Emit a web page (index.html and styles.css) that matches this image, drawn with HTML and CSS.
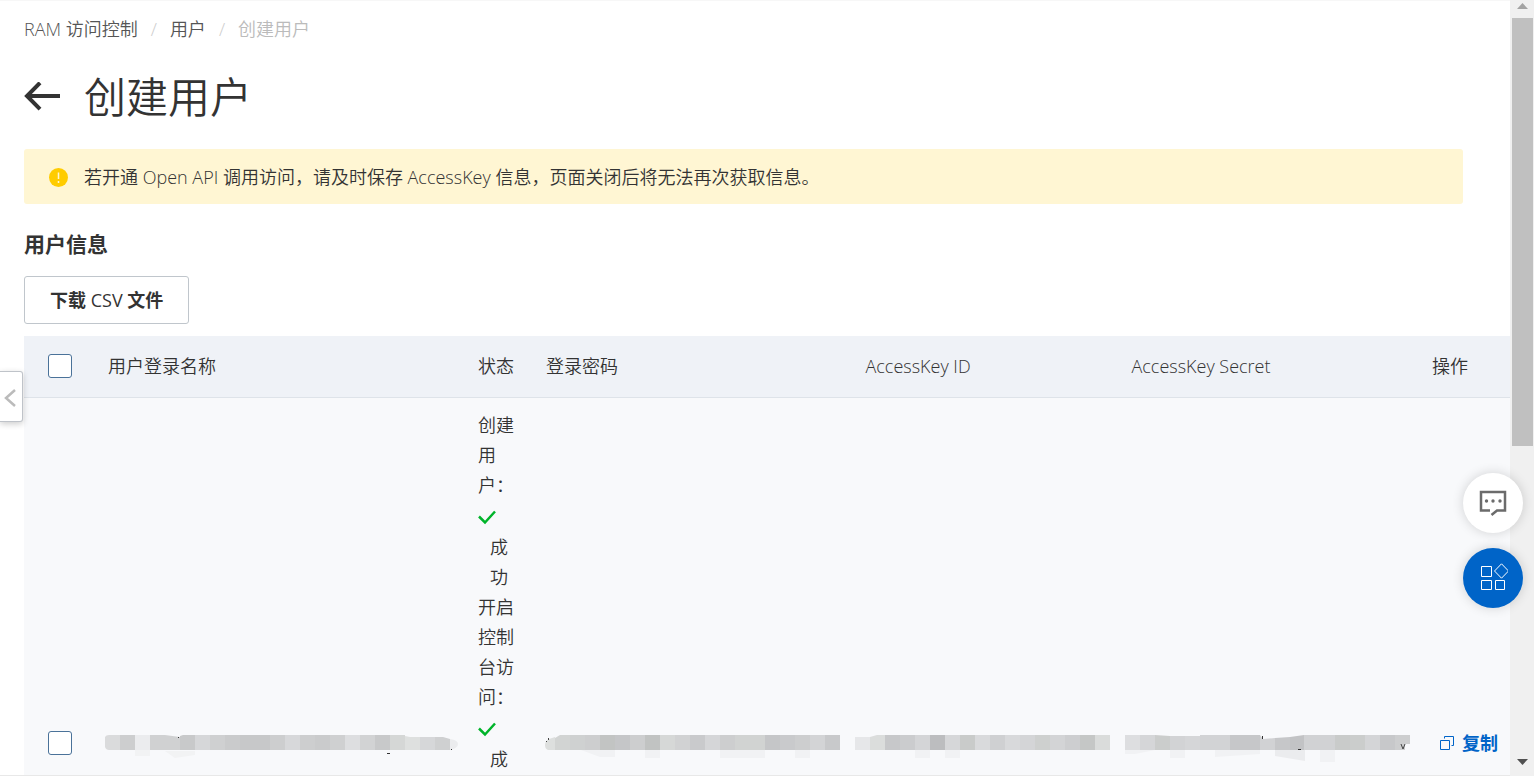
FILE: index.html
```html
<!DOCTYPE html>
<html lang="zh-CN">
<head>
    <meta charset="UTF-8">
    <meta name="viewport" content="width=device-width, initial-scale=1.0">
    <title>创建用户</title>
    <link rel="stylesheet" href="styles.css">
</head>
<body>
    <main class="page">
        <nav class="breadcrumb">
            <a href="#">RAM 访问控制</a>
            <span class="separator">/</span>
            <a href="#">用户</a>
            <span class="separator">/</span>
            <span class="current">创建用户</span>
        </nav>

        <header class="title-bar">
            <a href="#" class="back" aria-label="返回">
                <svg width="36" height="30" viewBox="0 0 36 30" fill="none" stroke="#333" stroke-width="4">
                    <path d="M36 14H3M16 .8L3 14L16 27.200"/>
                </svg>
            </a>
            <h1>创建用户</h1>
        </header>

        <div class="notice">
            <svg width="19" height="19" viewBox="0 0 19 19">
                <circle cx="9.500" cy="9.500" r="9.500" fill="#fc0"/>
                <path d="M9.500 4.500V11M9.500 13V15" stroke="#fff6d3" stroke-width="1.500"/>
            </svg>
            <p>若开通 Open API 调用访问，请及时保存 AccessKey 信息，页面关闭后将无法再次获取信息。</p>
        </div>

        <h2>用户信息</h2>
        <button type="button" class="download"><b>下载</b> CSV <b>文件</b></button>

        <table class="users">
            <colgroup>
                <col class="col-check">
                <col class="col-name">
                <col class="col-status">
                <col class="col-password">
                <col class="col-key">
                <col>
                <col class="col-action">
            </colgroup>
            <thead>
                <tr>
                    <th class="check"><input type="checkbox" aria-label="全选"></th>
                    <th>用户登录名称</th>
                    <th>状态</th>
                    <th>登录密码</th>
                    <th>AccessKey ID</th>
                    <th>AccessKey Secret</th>
                    <th>操作</th>
                </tr>
            </thead>
            <tbody>
                <tr>
                    <td class="check"><input type="checkbox" aria-label="选择用户"></td>
                    <td>
                        <svg class="mask" width="330" height="24" viewBox="0 0 330 24">
                            <path d="M27 19h15v6H27zM57 20h30v4l-20 3z" fill="#f2f3f4"/>
                            <path d="M-3 6q1-2 4-2h11v15H1q-3 0-4-3z" fill="#dadbdc"/>
                            <path d="M12 4h15v15H12z" fill="#cdcecf"/>
                            <path d="M27 4h15v15H27z" fill="#ebecee"/>
                            <path d="M42 4h15l15 2v13H42z" fill="#d0d1d2"/>
                            <path d="M72 5l3-1h12v15H72z" fill="#c8c9ca"/>
                            <path d="M87 4h15v15H87z" fill="#d6d7d9"/>
                            <path d="M102 4h15v15h-15z" fill="#cfd0d1"/>
                            <path d="M117 4h15v15h-15z" fill="#cacbcc"/>
                            <path d="M132 4h30v15h-30z" fill="#c7c8c9"/>
                            <path d="M162 4h15v15h-15z" fill="#cdcecf"/>
                            <path d="M177 4h15v15h-15z" fill="#d7d8da"/>
                            <path d="M192 4h15v15h-15z" fill="#cdcecf"/>
                            <path d="M207 4h15v15h-15z" fill="#cacbcc"/>
                            <path d="M222 4h15v15h-15z" fill="#cfd0d1"/>
                            <path d="M237 4h15v15h-15z" fill="#dddee0"/>
                            <path d="M252 4h15v15h-15z" fill="#d2d3d4"/>
                            <path d="M267 4h15v15h-15z" fill="#c8c9ca"/>
                            <path d="M282 4h15v15h-15z" fill="#d5d7d6"/>
                            <path d="M297 5l5 1h10v13h-15z" fill="#dee0df"/>
                            <path d="M312 6h15v13h-15z" fill="#d6d7d9"/>
                            <path d="M327 6h8l7 2v11h-15z" fill="#cfd0d1"/>
                            <path d="M342 8q8 1 8 5t-8 6z" fill="#ebecee"/>
                            <path d="M70 6h1v1h-1zM279 22h3v1h-3zM343 18h1v1h-1z" fill="#333"/>
                        </svg>
                    </td>
                    <td class="status">
                        <div>创建用户：</div>
                        <svg width="18" height="32" viewBox="0 0 18 32" fill="none" stroke="#00b42a" stroke-width="2.500">
                            <path d="M1 16.500L7 22.500L17 11.500"/>
                        </svg>
                        <div class="result">成功</div>
                        <div>开启控制台访问：</div>
                        <svg width="18" height="32" viewBox="0 0 18 32" fill="none" stroke="#00b42a" stroke-width="2.500">
                            <path d="M1 16.500L7 22.500L17 11.500"/>
                        </svg>
                        <div class="result">成功</div>
                    </td>
                    <td>
                        <svg class="mask" width="280" height="24" viewBox="0 0 280 24">
                            <path d="M35 19h34v7H54zM99 19h15v8H99zM174 19h45v8h-45zM249 19h15v8h-15z" fill="#f1f2f4"/>
                            <path d="M9 6v13H2q-3-1-3-5t4-6z" fill="#dddfde"/>
                            <path d="M9 7l5-3h10v15H9z" fill="#d2d4d3"/>
                            <path d="M24 4h15v15H24z" fill="#cfd1d1"/>
                            <path d="M39 4h15v15H39z" fill="#cdcecf"/>
                            <path d="M54 4h15v15H54z" fill="#c2c4c3"/>
                            <path d="M69 4h15v15H69z" fill="#c5c6c8"/>
                            <path d="M84 4h15v15H84z" fill="#cdcecf"/>
                            <path d="M99 4h15v15H99z" fill="#c1c3c2"/>
                            <path d="M114 4h15v15h-15z" fill="#d6d8d7"/>
                            <path d="M129 4h15v15h-15z" fill="#d1d2d3"/>
                            <path d="M144 4h15v15h-15z" fill="#c9cacc"/>
                            <path d="M159 4h15v15h-15z" fill="#d5d6d8"/>
                            <path d="M174 4h15v15h-15z" fill="#cdcecf"/>
                            <path d="M189 4h30v15h-30z" fill="#d1d3d2"/>
                            <path d="M219 4h15v15h-15z" fill="#c5c6c8"/>
                            <path d="M234 4h15v15h-15z" fill="#c9cacc"/>
                            <path d="M249 4h15v15h-15z" fill="#cdcecf"/>
                            <path d="M264 4h15v15h-15z" fill="#d3d4d6"/>
                            <path d="M279 4h15v15h-15z" fill="#c8c9cb"/>
                            <path d="M2 7h1v2H2zM0 10h1v1H0z" fill="#444"/>
                        </svg>
                    </td>
                    <td>
                        <svg class="mask" width="230" height="24" viewBox="0 0 230 24">
                            <path d="M50 19h15v8H50zM80 19h15v8H80z" fill="#f1f2f4"/>
                            <path d="M-10 6H5v13h-15z" fill="#e6e7e9"/>
                            <path d="M5 6l7-2h8v15H5z" fill="#dbdddc"/>
                            <path d="M20 4h15v15H20z" fill="#c7c8ca"/>
                            <path d="M35 4h15v15H35z" fill="#cbccce"/>
                            <path d="M50 4h15v15H50z" fill="#d4d5d7"/>
                            <path d="M65 4h15v15H65z" fill="#bcbdbf"/>
                            <path d="M80 4h15v15H80z" fill="#d6d7d9"/>
                            <path d="M95 4h15v15H95z" fill="#c9cbca"/>
                            <path d="M110 4h15v15h-15z" fill="#d9dadc"/>
                            <path d="M125 4h15v15h-15z" fill="#cfd0d2"/>
                            <path d="M140 4h15v15h-15z" fill="#d8d9db"/>
                            <path d="M155 4h15v15h-15z" fill="#d4d5d7"/>
                            <path d="M170 4h15v15h-15z" fill="#ced0cf"/>
                            <path d="M185 4h15v15h-15z" fill="#d3d4d6"/>
                            <path d="M200 4h15v15h-15z" fill="#cdced0"/>
                            <path d="M215 4h15v15h-15z" fill="#c5c7c6"/>
                            <path d="M230 4h15v15h-15z" fill="#dadcdb"/>
                        </svg>
                    </td>
                    <td>
                        <svg class="mask" width="260" height="24" viewBox="0 0 260 24">
                            <path d="M-6 19h30l-20 4h-10zM39 19h15v8H39zM84 19h45v4l-45 3zM189 19h15v12h-15z" fill="#f1f2f4"/>
                            <path d="M144 19h30v11l-30-5z" fill="#ebecee"/>
                            <path d="M-6 4H9v15H-6z" fill="#dddee0"/>
                            <path d="M9 4h15v15H9z" fill="#d5d6d8"/>
                            <path d="M24 4l15 1v14H24z" fill="#cbcdcc"/>
                            <path d="M39 5h15v14H39z" fill="#d2d3d5"/>
                            <path d="M54 5h15v14H54z" fill="#d5d6d8"/>
                            <path d="M69 4h30v15H69z" fill="#d2d3d5"/>
                            <path d="M99 4h30v15H99z" fill="#c6c7c9"/>
                            <path d="M129 4l3 4 12-1v12h-15z" fill="#d1d2d4"/>
                            <path d="M144 7l15-1v13h-15z" fill="#c6c7c9"/>
                            <path d="M159 6l14-2v15h-14z" fill="#c2c3c5"/>
                            <path d="M173 4h31v15h-31z" fill="#d1d2d4"/>
                            <path d="M204 4h15v15h-15z" fill="#c9cbca"/>
                            <path d="M219 4h15v15h-15z" fill="#cbcdcc"/>
                            <path d="M234 4h15v15h-15z" fill="#d4d5d7"/>
                            <path d="M249 4h15v15h-15z" fill="#c7c8ca"/>
                            <path d="M264 4h15v9h-5v6h-10z" fill="#cdcecf"/>
                            <path d="M131 5h1v3h-1zM167 18h3v1h-3z" fill="#333"/>
                            <path d="M270 13l2 5 2-5" fill="none" stroke="#444"/>
                        </svg>
                    </td>
                    <td class="action">
                        <a href="#">
                            <svg width="14" height="14" viewBox="0 0 14 14" fill="none" stroke="#0064c8">
                                <path d="M.5 4.500h9v9h-9zM4.500 2.500V.5h9v9h-2"/>
                            </svg>
                            复制
                        </a>
                    </td>
                </tr>
            </tbody>
        </table>
    </main>

    <div class="scrollbar" aria-hidden="true">
        <svg width="11" height="6" viewBox="0 0 11 6"><path d="M0 6L5.500 0L11 6z" fill="#a3a3a3"/></svg>
        <div class="thumb"></div>
        <svg width="11" height="6" viewBox="0 0 11 6"><path d="M0 0L5.500 6L11 0z" fill="#505050"/></svg>
    </div>

    <button type="button" class="collapse" aria-label="展开菜单">
        <svg width="12" height="18" viewBox="0 0 12 18" fill="none" stroke="#bbb" stroke-width="2.500">
            <path d="M11 1L2 9L11 17"/>
        </svg>
    </button>

    <div class="float-buttons">
        <button type="button" class="feedback" aria-label="反馈">
            <svg width="28" height="26" viewBox="0 0 28 26">
                <path d="M11 20.500H2V2H26V20.500H18L12.500 25" fill="none" stroke="#6b6b6b" stroke-width="2.500"/>
                <circle cx="7.500" cy="11" r="1.700" fill="#6b6b6b"/>
                <circle cx="14" cy="11" r="1.700" fill="#6b6b6b"/>
                <circle cx="21" cy="11" r="1.700" fill="#6b6b6b"/>
            </svg>
        </button>
        <button type="button" class="apps" aria-label="应用">
            <svg width="30" height="30" viewBox="0 0 30 30" fill="none" stroke="#fff">
                <path d="M3.500 3.500h10v10h-10zM3.500 17.500h10v9h-10zM17.500 17.500h9v9h-9zM23.500 .8L30.500 8L23.500 15.200L16.500 8z"/>
            </svg>
        </button>
    </div>
</body>
</html>
```
FILE: styles.css
```css
* {
    box-sizing: border-box;
}
body {
    margin: 0;
    display: flex;
    height: 100vh;
    overflow: hidden;
    font-family: "Open Sans", "Noto Sans CJK SC", sans-serif;
    font-size: 18px;
    font-weight: 350;
    line-height: 30px;
    color: #333;
    background-color: #fff;
}
a {
    color: inherit;
    text-decoration: none;
}
button {
    font: inherit;
    color: inherit;
    cursor: pointer;
}
svg {
    display: block;
    flex: none;
}
.page {
    flex: 1;
    min-width: 0;
    padding: 13px 0 0 24px;
    overflow: hidden;
    border-top: 1px solid #f7f7f7;
    border-bottom: 1px solid #e8e8e8;
}
.breadcrumb {
    display: flex;
    gap: 13px;
    color: #555;
}
.breadcrumb .separator {
    color: #ccc;
}
.breadcrumb .current {
    color: #bbb;
}
.title-bar {
    display: flex;
    align-items: center;
    gap: 24px;
    margin-top: 23px;
}
h1 {
    margin: 0;
    font-size: 42px;
    font-weight: 350;
    line-height: 60px;
}
.notice {
    display: flex;
    align-items: center;
    gap: 16px;
    margin: 22px 47px 0 0;
    padding: 13px 24px 12px 25px;
    border-radius: 3px;
    background-color: #fff6d3;
}
.notice p {
    margin: 0;
}
h2 {
    margin: 24px 0 16px;
    font-size: 21px;
    font-weight: 700;
    line-height: 32px;
}
.download {
    height: 48px;
    padding: 0 25px;
    border: 1px solid #c0c6cc;
    border-radius: 3px;
    background-color: #fff;
    font-weight: 400;
}
.users {
    width: 100%;
    margin-top: 12px;
    table-layout: fixed;
    border-collapse: separate;
    border-spacing: 0;
}
.col-check,
.col-status {
    width: 68px;
}
.col-name {
    width: 24.9%;
}
.col-password {
    width: 21.5%;
}
.col-key {
    width: 17.9%;
}
.col-action {
    width: 94px;
}
th,
td {
    padding: 0 16px;
    text-align: left;
}
th {
    height: 62px;
    padding-bottom: 2px;
    font-weight: 350;
    border-bottom: 1px solid #dee3e9;
    background-color: #eff2f7;
}
td {
    height: 690px;
    background-color: #f8f9fb;
}
td.check,
th.check {
    padding-left: 24px;
    padding-right: 0;
}
.check input {
    display: block;
    width: 24px;
    height: 24px;
    margin: 0;
    appearance: none;
    border: 1px solid #4a7299;
    border-radius: 3px;
    background-color: #fff;
}
.status {
    padding-top: 12px;
    vertical-align: top;
}
.status .result {
    padding-left: 12px;
}
.mask {
    overflow: visible;
}
.action {
    padding: 0 12px 0 24px;
}
.action a {
    display: flex;
    align-items: center;
    gap: 8px;
    font-weight: 700;
    color: #0064c8;
    white-space: nowrap;
}
.scrollbar {
    display: flex;
    flex-direction: column;
    align-items: center;
    width: 24px;
    padding: 3px 1px 11px 2px;
    background-color: #f0f0f0;
}
.scrollbar .thumb {
    width: 100%;
    height: 428px;
    margin: 9px 0 auto;
    background-color: #c0c0c0;
}
.collapse {
    position: fixed;
    left: 0;
    top: 371px;
    display: flex;
    align-items: center;
    width: 23px;
    height: 51px;
    padding: 2px 0 0 4px;
    border: 1px solid #bfc3c9;
    border-left: 0;
    border-radius: 0 3px 3px 0;
    background-color: #fff;
    box-shadow: 0 2px 6px rgba(0, 0, 0, 0.2);
}
.float-buttons {
    position: fixed;
    right: 11px;
    bottom: 168px;
    display: flex;
    flex-direction: column;
    gap: 15px;
}
.float-buttons button {
    display: flex;
    align-items: center;
    justify-content: center;
    width: 60px;
    height: 60px;
    padding: 0;
    border: 0;
    border-radius: 50%;
    background-color: #fff;
    box-shadow: 0 0 12px rgba(0, 0, 0, 0.16);
}
.float-buttons .apps {
    background-color: #0064c8;
}
```
